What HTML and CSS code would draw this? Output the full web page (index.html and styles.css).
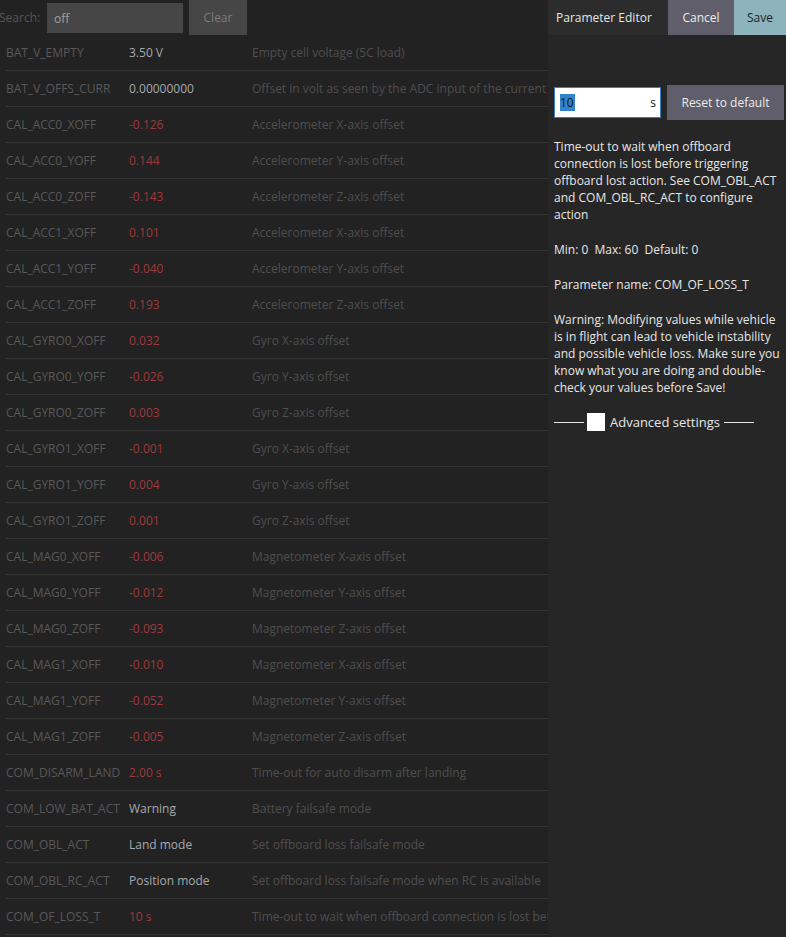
FILE: index.html
```html
<!DOCTYPE html>
<html>
<head>
<meta charset="utf-8">
<link rel="stylesheet" href="styles.css">
</head>
<body>
<div class="app">
  <div class="main">
    <div class="search-bar">
      <span class="search-label">Search:</span>
      <input class="search-input" type="text" value="off">
      <button class="btn-clear">Clear</button>
    </div>
    <div class="table">
      <div class="row"><span class="c-name">BAT_V_EMPTY</span><span class="c-val">3.50 V</span><span class="c-desc">Empty cell voltage (5C load)</span></div>
      <div class="row"><span class="c-name">BAT_V_OFFS_CURR</span><span class="c-val">0.00000000</span><span class="c-desc">Offset in volt as seen by the ADC input of the current sensor</span></div>
      <div class="row"><span class="c-name">CAL_ACC0_XOFF</span><span class="c-val mod">-0.126</span><span class="c-desc">Accelerometer X-axis offset</span></div>
      <div class="row"><span class="c-name">CAL_ACC0_YOFF</span><span class="c-val mod">0.144</span><span class="c-desc">Accelerometer Y-axis offset</span></div>
      <div class="row"><span class="c-name">CAL_ACC0_ZOFF</span><span class="c-val mod">-0.143</span><span class="c-desc">Accelerometer Z-axis offset</span></div>
      <div class="row"><span class="c-name">CAL_ACC1_XOFF</span><span class="c-val mod">0.101</span><span class="c-desc">Accelerometer X-axis offset</span></div>
      <div class="row"><span class="c-name">CAL_ACC1_YOFF</span><span class="c-val mod">-0.040</span><span class="c-desc">Accelerometer Y-axis offset</span></div>
      <div class="row"><span class="c-name">CAL_ACC1_ZOFF</span><span class="c-val mod">0.193</span><span class="c-desc">Accelerometer Z-axis offset</span></div>
      <div class="row"><span class="c-name">CAL_GYRO0_XOFF</span><span class="c-val mod">0.032</span><span class="c-desc">Gyro X-axis offset</span></div>
      <div class="row"><span class="c-name">CAL_GYRO0_YOFF</span><span class="c-val mod">-0.026</span><span class="c-desc">Gyro Y-axis offset</span></div>
      <div class="row"><span class="c-name">CAL_GYRO0_ZOFF</span><span class="c-val mod">0.003</span><span class="c-desc">Gyro Z-axis offset</span></div>
      <div class="row"><span class="c-name">CAL_GYRO1_XOFF</span><span class="c-val mod">-0.001</span><span class="c-desc">Gyro X-axis offset</span></div>
      <div class="row"><span class="c-name">CAL_GYRO1_YOFF</span><span class="c-val mod">0.004</span><span class="c-desc">Gyro Y-axis offset</span></div>
      <div class="row"><span class="c-name">CAL_GYRO1_ZOFF</span><span class="c-val mod">0.001</span><span class="c-desc">Gyro Z-axis offset</span></div>
      <div class="row"><span class="c-name">CAL_MAG0_XOFF</span><span class="c-val mod">-0.006</span><span class="c-desc">Magnetometer X-axis offset</span></div>
      <div class="row"><span class="c-name">CAL_MAG0_YOFF</span><span class="c-val mod">-0.012</span><span class="c-desc">Magnetometer Y-axis offset</span></div>
      <div class="row"><span class="c-name">CAL_MAG0_ZOFF</span><span class="c-val mod">-0.093</span><span class="c-desc">Magnetometer Z-axis offset</span></div>
      <div class="row"><span class="c-name">CAL_MAG1_XOFF</span><span class="c-val mod">-0.010</span><span class="c-desc">Magnetometer X-axis offset</span></div>
      <div class="row"><span class="c-name">CAL_MAG1_YOFF</span><span class="c-val mod">-0.052</span><span class="c-desc">Magnetometer Y-axis offset</span></div>
      <div class="row"><span class="c-name">CAL_MAG1_ZOFF</span><span class="c-val mod">-0.005</span><span class="c-desc">Magnetometer Z-axis offset</span></div>
      <div class="row"><span class="c-name">COM_DISARM_LAND</span><span class="c-val mod">2.00 s</span><span class="c-desc">Time-out for auto disarm after landing</span></div>
      <div class="row"><span class="c-name">COM_LOW_BAT_ACT</span><span class="c-val">Warning</span><span class="c-desc">Battery failsafe mode</span></div>
      <div class="row"><span class="c-name">COM_OBL_ACT</span><span class="c-val">Land mode</span><span class="c-desc">Set offboard loss failsafe mode</span></div>
      <div class="row"><span class="c-name">COM_OBL_RC_ACT</span><span class="c-val">Position mode</span><span class="c-desc">Set offboard loss failsafe mode when RC is available</span></div>
      <div class="row"><span class="c-name">COM_OF_LOSS_T</span><span class="c-val mod">10 s</span><span class="c-desc">Time-out to wait when offboard connection is lost before triggering offboard lost action</span></div>
    </div>
  </div>
  <aside class="editor">
    <div class="editor-head">
      <span class="editor-title">Parameter Editor</span>
      <button class="btn-cancel">Cancel</button>
      <button class="btn-save">Save</button>
    </div>
    <div class="editor-body">
      <div class="value-row">
        <div class="value-box"><span class="value-sel">10</span><span class="value-unit">s</span></div>
        <button class="btn-reset">Reset to default</button>
      </div>
      <p class="txt">Time-out to wait when offboard connection is lost before triggering offboard lost action. See COM_OBL_ACT and COM_OBL_RC_ACT to configure action</p>
      <p class="txt">Min: 0&nbsp; Max: 60&nbsp; Default: 0</p>
      <p class="txt">Parameter name: COM_OF_LOSS_T</p>
      <p class="txt">Warning: Modifying values while vehicle is in flight can lead to vehicle instability and possible vehicle loss. Make sure you know what you are doing and double-check your values before Save!</p>
      <div class="adv">
        <span class="adv-line"></span>
        <span class="adv-check"></span>
        <span class="adv-label">Advanced settings</span>
        <span class="adv-line"></span>
      </div>
    </div>
  </aside>
</div>
</body>
</html>
```

FILE: styles.css
```css
* { box-sizing: border-box; }
html, body {
  margin: 0;
  padding: 0;
  background: #222222;
  font-family: "Open Sans", "Liberation Sans", sans-serif;
  font-size: 12px;
  overflow: hidden;
}
.app {
  display: flex;
  width: 786px;
  height: 937px;
}
.main {
  width: 548px;
  flex: none;
  overflow: hidden;
}
.search-bar {
  display: flex;
  align-items: flex-start;
  height: 35px;
}
.search-label {
  color: #555555;
  line-height: 35px;
  margin-left: -1px;
  width: 48px;
  flex: none;
}
.search-input {
  margin-top: 3px;
  width: 136px;
  height: 30px;
  background: #464646;
  border: none;
  outline: none;
  color: #a0a0a0;
  font-family: inherit;
  font-size: 12px;
  padding: 0 0 0 7px;
}
.btn-clear {
  margin-left: 6px;
  width: 58px;
  height: 35px;
  background: #464646;
  border: none;
  color: #7a7a7a;
  font-family: inherit;
  font-size: 12px;
  padding: 0;
}
.table {
  display: flex;
  flex-direction: column;
}
.row {
  display: flex;
  margin-left: 6px;
  height: 36px;
  border-bottom: 1px solid #353535;
  line-height: 35px;
  white-space: nowrap;
}
.c-name {
  width: 123px;
  flex: none;
  color: #585858;
  overflow: hidden;
}
.c-val {
  width: 123px;
  flex: none;
  color: #a6a9ad;
}
.c-val.mod { color: #9e3a3c; }
.c-desc {
  color: #4e4e4e;
  overflow: hidden;
}
.editor {
  width: 238px;
  flex: none;
  background: #262626;
  color: #e6e6e6;
}
.editor-head {
  display: flex;
  height: 35px;
  background: #2c2c2c;
}
.editor-title {
  flex: 1;
  padding-left: 8px;
  line-height: 35px;
  color: #e6e6e6;
}
.btn-cancel, .btn-save {
  border: none;
  font-family: inherit;
  font-size: 12px;
  height: 35px;
  padding: 0;
}
.btn-cancel {
  width: 66px;
  background: #5f5e6a;
  color: #ececec;
}
.btn-save {
  width: 52px;
  background: #8db3bc;
  color: #1e1e1e;
}
.editor-body {
  padding: 50px 0 0 6px;
}
.value-row {
  display: flex;
  align-items: center;
  gap: 6px;
}
.value-box {
  width: 107px;
  height: 31px;
  background: #ffffff;
  border: 1px solid #3b7fc4;
  display: flex;
  align-items: center;
  justify-content: space-between;
  padding: 0 4px 0 5px;
  color: #111;
}
.value-sel {
  background: #3184c9;
  color: #111;
  line-height: 17px;
  padding-right: 1px;
}
.value-unit { color: #111; }
.btn-reset {
  width: 117px;
  height: 35px;
  background: #5f5e6a;
  border: none;
  color: #ececec;
  font-family: inherit;
  font-size: 12px;
  padding: 0;
}
.txt {
  margin: 18px 0 0 0;
  line-height: 17px;
  padding-right: 4px;
}
.txt + .txt { margin-top: 18px; }
.adv {
  display: flex;
  align-items: center;
  margin-top: 16px;
  height: 20px;
}
.adv-line {
  width: 30px;
  height: 1px;
  background: #e6e6e6;
}
.adv-check {
  width: 18px;
  height: 18px;
  background: #ffffff;
  margin: 0 5px 0 3px;
}
.adv-label {
  font-size: 13px;
  margin-right: 4px;
}
```
